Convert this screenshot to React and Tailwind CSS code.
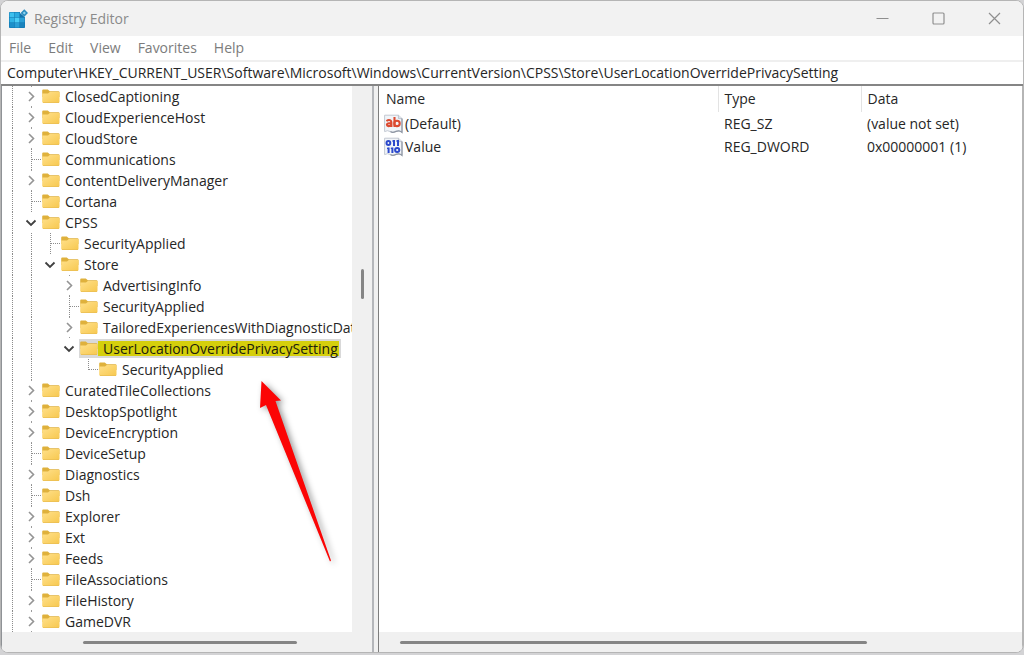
import { Fragment, useState } from "react";

const TREE = [
  { name: "ClosedCaptioning", closed: true },
  { name: "CloudExperienceHost", closed: true },
  { name: "CloudStore", closed: true },
  { name: "Communications" },
  { name: "ContentDeliveryManager", closed: true },
  { name: "Cortana" },
  {
    name: "CPSS",
    children: [
      { name: "SecurityApplied" },
      {
        name: "Store",
        children: [
          { name: "AdvertisingInfo", closed: true },
          { name: "SecurityApplied" },
          { name: "TailoredExperiencesWithDiagnosticData", closed: true },
          {
            name: "UserLocationOverridePrivacySetting",
            selected: true,
            children: [{ name: "SecurityApplied" }],
          },
        ],
      },
    ],
  },
  { name: "CuratedTileCollections", closed: true },
  { name: "DesktopSpotlight", closed: true },
  { name: "DeviceEncryption", closed: true },
  { name: "DeviceSetup" },
  { name: "Diagnostics", closed: true },
  { name: "Dsh" },
  { name: "Explorer", closed: true },
  { name: "Ext", closed: true },
  { name: "Feeds", closed: true },
  { name: "FileAssociations" },
  { name: "FileHistory", closed: true },
  { name: "GameDVR", closed: true },
];

const VALUES = [
  { name: "(Default)", type: "REG_SZ", data: "(value not set)", kind: "string" },
  { name: "Value", type: "REG_DWORD", data: "0x00000001 (1)", kind: "binary" },
];

function AppIcon() {
  return (
    <svg width="20" height="20" viewBox="0 0 20 20" aria-hidden="true">
      <rect x="1" y="3" width="16" height="16" rx="1" fill="#1173ad" />
      <rect x="1.5" y="3.5" width="4.8" height="4.8" fill="#3cc0ee" />
      <rect x="6.7" y="3.5" width="4.8" height="4.8" fill="#2cabe0" />
      <rect x="1.5" y="8.7" width="4.8" height="4.8" fill="#2fb3e6" />
      <rect x="6.7" y="8.7" width="4.8" height="4.8" fill="#4bcdf5" />
      <rect x="11.9" y="8.7" width="4.7" height="4.8" fill="#2a9fd6" />
      <rect x="1.5" y="13.9" width="4.8" height="4.7" fill="#1c8fca" />
      <rect x="6.7" y="13.9" width="4.8" height="4.7" fill="#2a9fd6" />
      <rect x="11.9" y="13.9" width="4.7" height="4.7" fill="#1b83bd" />
      <path d="M12 0H20V8.2H17L12 4Z" fill="#f2f2f2" />
      <path d="M16.3 0.3L20 4L16.3 7.7L12.6 4Z" fill="#2a8cc0" />
      <path d="M16.3 2.4L17.9 4L16.3 5.6L14.7 4Z" fill="#8fd4ef" />
    </svg>
  );
}

function Folder() {
  return (
    <svg width="18" height="15" viewBox="0 0 18 15" className="shrink-0" aria-hidden="true">
      <defs>
        <linearGradient id="folder-front" x1="0" y1="0" x2="1" y2="1">
          <stop offset="0" stopColor="#ffe08a" />
          <stop offset="1" stopColor="#f7c84f" />
        </linearGradient>
      </defs>
      <path d="M0.2 1.5Q0.2 0.5 1.2 0.5H5.8L7.8 2.2H16.5Q17.5 2.2 17.5 3.2V8H0.2Z" fill="#dfb13c" />
      <path d="M0.2 4.4H6L7.8 3H17.5V12.8Q17.5 13.8 16.5 13.8H1.2Q0.2 13.8 0.2 12.8Z" fill="url(#folder-front)" />
      <path d="M1 13.5H17" stroke="#e8b740" strokeWidth="0.7" />
    </svg>
  );
}

function ValueIcon({ kind }) {
  const color = kind === "string" ? "#dc4a30" : "#2c49cc";
  return (
    <svg width="19" height="20" viewBox="0 0 19 20" className="shrink-0" aria-hidden="true">
      <path d="M0.6 1.2H14.4L18 4.6V18.4Q15.4 15.8 12 17.4Q8.6 19.2 6.4 17.6Q3.4 15.8 0.6 17.6Z" fill="#f1f4f8" stroke="#c3c9d3" />
      <path d="M14.4 1.2V4.6H18" fill="#dde1e8" stroke="#b4bac6" strokeWidth="0.8" />
      <path d="M18 4.6V18.4Q15.4 15.8 12 17.4Q8.6 19.2 6.4 17.6" fill="none" stroke="#8e96a3" strokeWidth="1.2" />
      {kind === "string" ? (
        <g fill="none" stroke={color} strokeWidth="2.1">
          <path d="M2.4 7Q4.8 5.4 6.4 6.4Q7.4 7 7.4 8.6V13M7.4 9.2H5.2Q2.9 9.4 2.9 10.9Q3.1 12.2 4.8 12.1Q6.6 12 7.4 10.6" />
          <path d="M10.5 3V13" />
          <circle cx="13" cy="9.4" r="2.7" />
        </g>
      ) : (
        <g fill="none" stroke={color} strokeWidth="2">
          <ellipse cx="4.4" cy="6" rx="1.9" ry="2" />
          <path d="M10 3V9M14 3V9" />
          <path d="M8.4 4H10M12.4 4H14M3 11.4H4.6M6.8 11.4H8.4" strokeWidth="1.4" />
          <path d="M4.6 10.4V16M8.4 10.4V16" />
          <ellipse cx="13.2" cy="13" rx="2.1" ry="1.9" />
        </g>
      )}
    </svg>
  );
}

/* One 19px-wide cell of the connector lines in front of a key. */
function Guide({ kind }) {
  return (
    <svg width="19" height="21" viewBox="0 0 19 21" className="shrink-0" aria-hidden="true">
      <g stroke="#8c8c8c" strokeDasharray="1 1" fill="none">
        {(kind === "line" || kind === "tee") && <path d="M9.5 0V21" />}
        {kind === "corner" && <path d="M9.5 0V11" />}
        {(kind === "tee" || kind === "corner") && <path d="M10 10.5H19" />}
      </g>
    </svg>
  );
}

function Expander({ open, name, onClick }) {
  return (
    <button type="button" onClick={onClick} aria-label={`${open ? "Collapse" : "Expand"} ${name}`} className="shrink-0">
      <svg width="19" height="21" viewBox="0 0 19 21" className="block" aria-hidden="true">
        {!open && <path d="M9.5 0V1M9.5 20V21" stroke="#9c9c9c" />}
        {open ? (
          <path d="M4.5 8.5L9 13L13.5 8.5" fill="none" stroke="#404040" strokeWidth="1.8" />
        ) : (
          <path d="M7 6L11.5 10.5L7 15" fill="none" stroke="#949494" strokeWidth="1.6" />
        )}
      </svg>
    </button>
  );
}

function Nodes({ nodes, guides, level, root }) {
  const [flipped, setFlipped] = useState({});
  return nodes.map((node, i) => {
    const last = !root && i === nodes.length - 1;
    const expandable = node.closed || node.children;
    const open = Boolean(node.children) !== Boolean(flipped[i]);
    return (
      <Fragment key={i}>
        <li
          role="treeitem"
          aria-level={level}
          aria-selected={Boolean(node.selected)}
          className="flex h-[21px] items-center whitespace-nowrap"
        >
          {guides.map((g, n) => (
            <Guide key={n} kind={g} />
          ))}
          {expandable ? (
            <Expander
              open={open}
              name={node.name}
              onClick={() => setFlipped({ ...flipped, [i]: !flipped[i] })}
            />
          ) : (
            <Guide kind={last ? "corner" : "tee"} />
          )}
          {node.selected ? (
            <span className="flex h-[19px] items-center bg-[#d9d9d9] pr-0.5 pl-px">
              <Folder />
              <span className="flex h-[15px] items-center bg-[#d5cf0c] pr-px pl-[5px] text-[#20200c]">{node.name}</span>
            </span>
          ) : (
            <span className="flex items-center pl-px">
              <Folder />
              <span className="pl-[5px]">{node.name}</span>
            </span>
          )}
        </li>
        {open && node.children && (
          <Nodes nodes={node.children} guides={[...guides, last ? "blank" : "line"]} level={level + 1} />
        )}
      </Fragment>
    );
  });
}

function TitleBar() {
  return (
    <header className="flex h-[35px] shrink-0 items-center bg-[#f2f2f2] pl-[7px]">
      <AppIcon />
      <h1 className="grow pl-1.5 text-[#8b8b8b]">Registry Editor</h1>
      <div className="flex h-full pr-px">
        <button type="button" aria-label="Minimize" className="flex w-14 items-center justify-center">
          <svg width="13" height="13" viewBox="0 0 13 13" stroke="#8f8f8f"><path d="M0.5 6.5H12.5" /></svg>
        </button>
        <button type="button" aria-label="Maximize" className="flex w-14 items-center justify-center">
          <svg width="13" height="13" viewBox="0 0 13 13" fill="none" stroke="#8f8f8f"><rect x="1" y="1" width="11" height="11" rx="1" strokeWidth="1.2" /></svg>
        </button>
        <button type="button" aria-label="Close" className="flex w-14 items-center justify-center">
          <svg width="13" height="13" viewBox="0 0 13 13" stroke="#8f8f8f" strokeWidth="1.2"><path d="M1 1L12 12M12 1L1 12" /></svg>
        </button>
      </div>
    </header>
  );
}

function Arrow() {
  return (
    <svg width="90" height="195" viewBox="250 375 90 195" className="pointer-events-none absolute top-[289px] left-[248px] overflow-visible" aria-hidden="true">
      <path
        d="M261.5 381L281 400.5L275.5 401L331 560.5L330 561.5L266 405L260 408Z"
        fill="#fb0505"
        className="drop-shadow-[3px_2px_3px_rgba(0,0,0,0.4)]"
      />
    </svg>
  );
}

export default function App() {
  return (
    <div className="flex h-screen flex-col bg-[#d3d3d5] pb-0.5 font-['Open_Sans','Noto_Sans',sans-serif] text-sm leading-5 text-[#262626]">
      <div className="flex min-h-0 grow flex-col overflow-hidden rounded-lg border border-[#b5b5b5] bg-white">
        <TitleBar />
        <nav aria-label="Menu" className="flex h-6 shrink-0 items-center gap-[17px] pl-2 text-[#7c7c7c]">
          {["File", "Edit", "View", "Favorites", "Help"].map((m) => (
            <button key={m} type="button">{m}</button>
          ))}
        </nav>
        <div className="flex h-6 shrink-0 border-t-2 border-[#efefef]">
          <input
            aria-label="Key path"
            className="w-full bg-white px-1.5 outline-none"
            defaultValue="Computer\HKEY_CURRENT_USER\Software\Microsoft\Windows\CurrentVersion\CPSS\Store\UserLocationOverridePrivacySetting"
          />
        </div>
        <main className="flex min-h-0 grow border-t-2 border-[#858585]">
          <section aria-label="Keys" className="relative flex w-[373px] shrink-0 flex-col border-r-2 border-l border-r-[#b4b6ba] border-l-[#8f9296]">
            <div className="flex min-h-0 grow">
              <ul role="tree" aria-label="Registry keys" className="min-w-0 grow overflow-hidden pl-px">
                <Nodes nodes={TREE} guides={["line"]} level={2} root />
              </ul>
              <div className="flex w-5 shrink-0 justify-center bg-[#f0f0f0] pt-[183px]">
                <div className="h-[30px] w-[3px] rounded-full bg-[#858585]" />
              </div>
            </div>
            <div className="flex h-5 shrink-0 items-center bg-[#f0f0f0] pl-[81px]">
              <div className="h-[3px] w-[214px] rounded-full bg-[#858585]" />
            </div>
            <Arrow />
          </section>
          <div className="w-1 shrink-0 bg-[#f0f0f0]" />
          <section aria-label="Values" className="flex min-w-0 grow flex-col border-r border-l border-r-[#b5b5b5] border-l-[#7d7d7d]">
            <div className="min-h-0 grow">
              <table className="w-full table-fixed text-left">
                <thead>
                  <tr className="h-[26px]">
                    <th className="w-[339px] border-r border-[#e3e3e3] pl-[7px] font-normal">Name</th>
                    <th className="w-[143px] border-r border-[#e3e3e3] pl-1.5 font-normal">Type</th>
                    <th className="pl-1.5 font-normal">Data</th>
                  </tr>
                </thead>
                <tbody>
                  {VALUES.map((v) => (
                    <tr key={v.name} className="h-[23px]">
                      <td className="pl-[5px]">
                        <span className="flex items-center gap-0.5">
                          <ValueIcon kind={v.kind} />
                          {v.name}
                        </span>
                      </td>
                      <td className="pl-1.5">{v.type}</td>
                      <td className="pl-1.5">{v.data}</td>
                    </tr>
                  ))}
                </tbody>
              </table>
            </div>
            <div className="flex h-5 shrink-0 items-center bg-[#f0f0f0] pl-[21px]">
              <div className="h-[3px] w-[467px] rounded-full bg-[#858585]" />
            </div>
          </section>
        </main>
      </div>
    </div>
  );
}
